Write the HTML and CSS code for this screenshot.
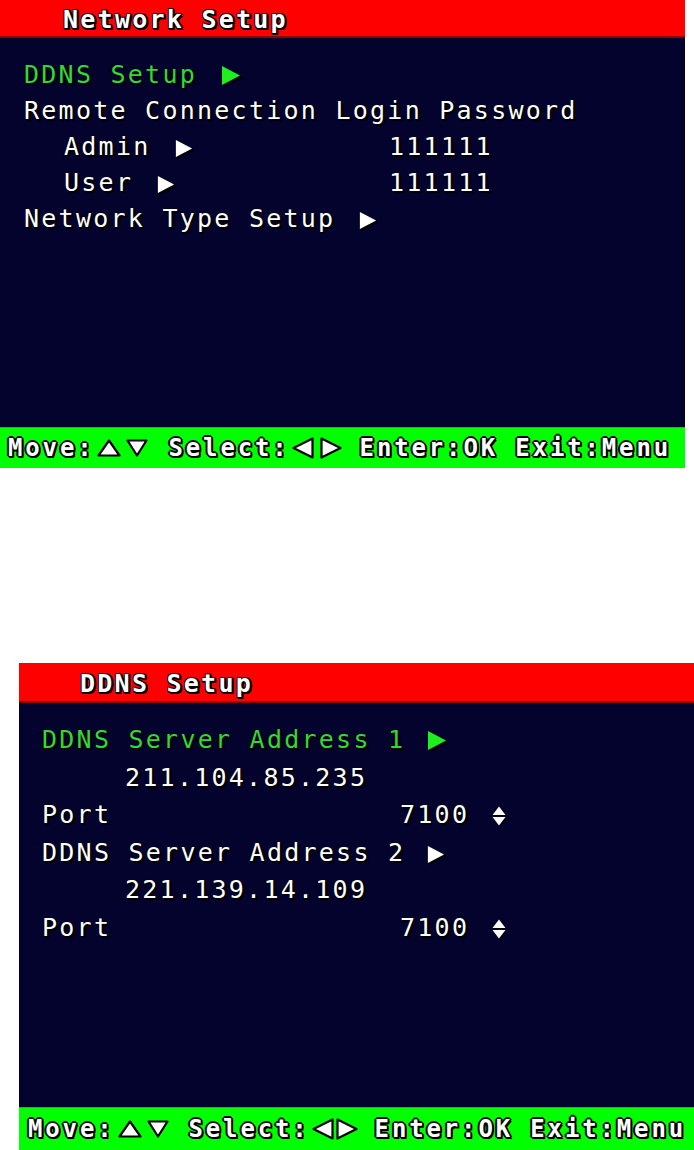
FILE: index.html
```html
<!DOCTYPE html>
<html lang="en">
<head>
<meta charset="utf-8">
<title>Network Setup</title>
<link rel="stylesheet" href="styles.css">
</head>
<body>
<section class="screen screen--net">
  <div class="title">Network Setup</div>
  <div class="menu">
    <div class="row row--active">DDNS Setup<svg class="tri tri--green" viewBox="0 0 20 21"><polygon points="1,1 19,10.5 1,20"/></svg></div>
    <div class="row">Remote Connection Login Password</div>
    <div class="row row--sub"><span class="label label--pw">Admin<svg class="tri" viewBox="0 0 20 21"><polygon points="1,1 19,10.5 1,20"/></svg></span><span class="value">111111</span></div>
    <div class="row row--sub"><span class="label label--pw">User<svg class="tri" viewBox="0 0 20 21"><polygon points="1,1 19,10.5 1,20"/></svg></span><span class="value">111111</span></div>
    <div class="row">Network Type Setup<svg class="tri" viewBox="0 0 20 21"><polygon points="1,1 19,10.5 1,20"/></svg></div>
  </div>
  <div class="footer">
    <span class="key">Move:</span><svg class="fa fa--up" viewBox="0 0 24 18"><polygon points="12,1.5 22.5,16.5 1.5,16.5"/></svg><svg class="fa fa--down" viewBox="0 0 22 18"><polygon points="1.5,1.5 20.5,1.5 11,16.5"/></svg><span class="key key--sel">Select:</span><svg class="fa fa--left" viewBox="0 0 22 22"><polygon points="1.5,11 20.5,1.5 20.5,20.5"/></svg><svg class="fa fa--right" viewBox="0 0 22 22"><polygon points="1.5,1.5 20.5,11 1.5,20.5"/></svg><span class="key key--enter">Enter:OK Exit:Menu</span>
  </div>
</section>

<section class="screen screen--ddns">
  <div class="title">DDNS Setup</div>
  <div class="menu">
    <div class="row row--active">DDNS Server Address 1<svg class="tri tri--green" viewBox="0 0 20 21"><polygon points="1,1 19,10.5 1,20"/></svg></div>
    <div class="row row--ip">211.104.85.235</div>
    <div class="row"><span class="label label--port">Port</span><span class="value">7100</span><svg class="updown" viewBox="0 0 14 20"><polygon points="7,0.5 13.5,9 0.5,9"/><polygon points="0.5,11 13.5,11 7,19.5"/></svg></div>
    <div class="row">DDNS Server Address 2<svg class="tri" viewBox="0 0 20 21"><polygon points="1,1 19,10.5 1,20"/></svg></div>
    <div class="row row--ip">221.139.14.109</div>
    <div class="row"><span class="label label--port">Port</span><span class="value">7100</span><svg class="updown" viewBox="0 0 14 20"><polygon points="7,0.5 13.5,9 0.5,9"/><polygon points="0.5,11 13.5,11 7,19.5"/></svg></div>
  </div>
  <div class="footer">
    <span class="key">Move:</span><svg class="fa fa--up" viewBox="0 0 24 18"><polygon points="12,1.5 22.5,16.5 1.5,16.5"/></svg><svg class="fa fa--down" viewBox="0 0 22 18"><polygon points="1.5,1.5 20.5,1.5 11,16.5"/></svg><span class="key key--sel">Select:</span><svg class="fa fa--left" viewBox="0 0 22 22"><polygon points="1.5,11 20.5,1.5 20.5,20.5"/></svg><svg class="fa fa--right" viewBox="0 0 22 22"><polygon points="1.5,1.5 20.5,11 1.5,20.5"/></svg><span class="key key--enter">Enter:OK Exit:Menu</span>
  </div>
</section>
</body>
</html>
```

FILE: styles.css
```css
html, body {
  margin: 0;
  padding: 0;
  background: #ffffff;
}

body {
  font-family: "DejaVu Sans Mono", "Liberation Mono", monospace;
}

.screen {
  display: flex;
  flex-direction: column;
  background: #03032e;
  color: #ffffff;
}

.screen--net {
  width: 685px;
}

.screen--ddns {
  width: 675px;
  margin: 195px 0 0 19px;
}

/* title bar */
.title {
  box-sizing: border-box;
  height: 38px;
  background: #ff0000;
  border-bottom: 2px solid #8e0000;
  padding-left: 63px;
  padding-top: 3px;
  line-height: 34px;
  font-size: 25px;
  font-weight: bold;
  letter-spacing: 2.25px;
  white-space: pre;
  text-shadow:
    -1px -1px 0 #000, 1px -1px 0 #000,
    -1px 1px 0 #000, 1px 1px 0 #000,
    2px 2px 0 #000, 0 2px 0 #000, 2px 0 0 #000;
}

.screen--ddns .title {
  height: 40px;
  padding-top: 3px;
  line-height: 36px;
  padding-left: 61px;
}

/* menu body */
.menu {
  box-sizing: border-box;
  height: 389px;
  padding-top: 19px;
  font-size: 25px;
  letter-spacing: 2.25px;
}

.screen--ddns .menu {
  height: 404px;
  padding-top: 18px;
}

.row {
  height: 36px;
  line-height: 36px;
  padding-left: 24px;
  white-space: pre;
  text-shadow: 1px 1px 0 #000, 2px 2px 1px #000, -1px 0 1px #000;
}

.screen--ddns .row {
  height: 37.6px;
  line-height: 37.6px;
  padding-left: 23px;
}

.row--active {
  color: #34d834;
}

.row--sub {
  padding-left: 64px;
}

.screen--ddns .row--ip {
  padding-left: 106px;
}

.label {
  display: inline-block;
}

.label--pw {
  width: 325px;
}

.label--port {
  width: 358px;
}

/* small solid right triangles */
.tri {
  width: 18px;
  height: 19px;
  margin-left: 24px;
  vertical-align: -3px;
  fill: #ffffff;
  filter: drop-shadow(1px 1px 0 #000) drop-shadow(1px 1px 0 #000);
}

.tri--green {
  width: 20px;
  height: 21px;
  fill: #1fef1f;
}

.screen--ddns .tri {
  margin-left: 22px;
}

.updown {
  width: 14px;
  height: 20px;
  margin-left: 23px;
  vertical-align: -3px;
  fill: #ffffff;
  filter: drop-shadow(1px 1px 0 #000);
}

/* footer */
.footer {
  box-sizing: border-box;
  height: 41px;
  background: #00ff00;
  border-top: 1px solid #5f8f66;
  padding-left: 8px;
  display: flex;
  align-items: center;
  font-size: 24px;
  font-weight: bold;
  letter-spacing: 2.85px;
  white-space: pre;
}

.screen--ddns .footer {
  height: 43px;
  padding-left: 9px;
}

.key {
  color: #ffffff;
  text-shadow:
    -1px -1px 0 #000, 1px -1px 0 #000,
    -1px 1px 0 #000, 1px 1px 0 #000,
    -2px 0 0 #000, 2px 0 0 #000,
    0 -2px 0 #000, 0 2px 0 #000,
    2px 2px 0 #000;
}

.key--sel {
  margin-left: 21px;
}

.key--enter {
  margin-left: 18px;
}

.fa {
  fill: #ffffff;
  stroke: #000000;
  stroke-width: 2.2;
  stroke-linejoin: round;
}

.fa--up {
  width: 24px;
  height: 18px;
  margin-left: 2px;
}

.fa--down {
  width: 22px;
  height: 18px;
  margin-left: 5px;
}

.fa--left {
  width: 22px;
  height: 22px;
  margin-left: 2px;
}

.fa--right {
  width: 22px;
  height: 22px;
  margin-left: 6px;
}

.screen--ddns .fa--up {
  margin-left: 3px;
}

.screen--ddns .key--sel {
  margin-left: 20px;
}

.screen--ddns .fa--right {
  margin-left: 2px;
}

.screen--ddns .key--enter {
  margin-left: 17px;
}
```
